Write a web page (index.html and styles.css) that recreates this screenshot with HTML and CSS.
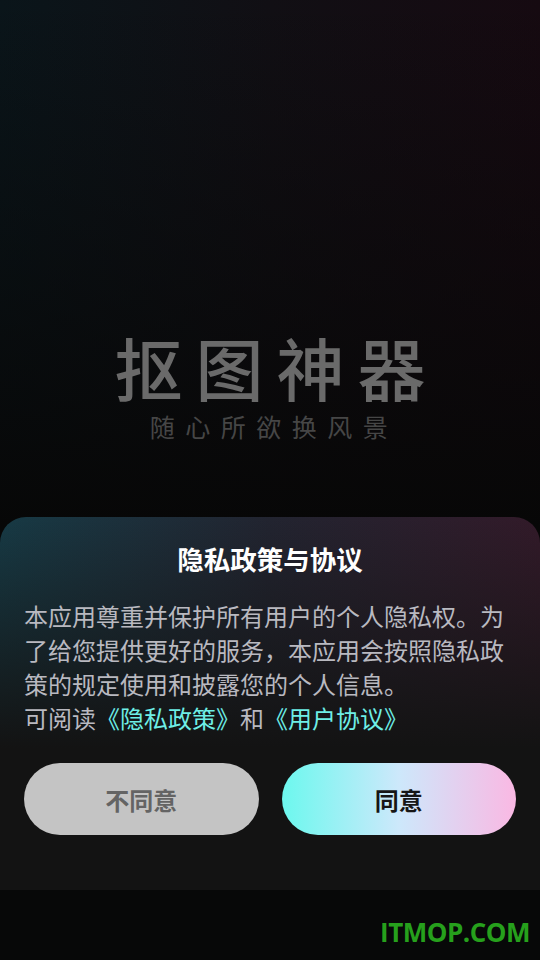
FILE: index.html
```html
<!DOCTYPE html>
<html>
<head>
  <title>抠图神器</title>
  <link rel="stylesheet" href="styles.css">
</head>
<body>
  <div class="app-screen">
    <header class="app-hero">
      <h1 class="app-title">抠图神器</h1>
      <p class="app-slogan">随心所欲换风景</p>
    </header>
    <section class="privacy-dialog">
      <h2 class="privacy-title">隐私政策与协议</h2>
      <p class="privacy-text">本应用尊重并保护所有用户的个人隐私权。为了给您提供更好的服务，本应用会按照隐私政策的规定使用和披露您的个人信息。<br>可阅读<a href="#" class="privacy-link">《隐私政策》</a>和<a href="#" class="privacy-link">《用户协议》</a></p>
      <div class="privacy-actions">
        <button class="btn btn-decline">不同意</button>
        <button class="btn btn-accept">同意</button>
      </div>
    </section>
    <footer class="app-footer">
      <span class="watermark">ITMOP.COM</span>
    </footer>
  </div>
</body>
</html>
```
FILE: styles.css
```css
body {
  margin: 0;
  background-color: #070707;
  font-family: "Noto Sans CJK SC", "Noto Sans", sans-serif;
}

.app-screen {
  width: 540px;
  height: 960px;
  display: flex;
  flex-direction: column;
  background:
    linear-gradient(to bottom, rgba(7, 7, 7, 0) 0%, #070707 55%),
    linear-gradient(to right, #0a151a 0%, #110f14 50%, #160a11 100%);
}

.app-hero {
  height: 517px;
  padding-top: 334px;
  box-sizing: border-box;
  text-align: center;
}

/* latin primary font keeps the line box tight, CJK glyphs fall back */
.app-title {
  margin: 0;
  font-family: "Liberation Sans", "Noto Sans CJK SC", sans-serif;
  font-size: 68px;
  line-height: 76px;
  font-weight: 500;
  letter-spacing: 13px;
  margin-right: -13px;
  color: #6a6a6a;
}

.app-slogan {
  margin: 1px 0 0;
  font-family: "Liberation Sans", "Noto Sans CJK SC", sans-serif;
  font-size: 25px;
  line-height: 34px;
  letter-spacing: 10.5px;
  margin-right: -8px;
  color: #464646;
}

.privacy-dialog {
  height: 373px;
  box-sizing: border-box;
  padding: 23px 24px 0;
  border-radius: 26px 26px 0 0;
  background:
    linear-gradient(to bottom, rgba(19, 19, 19, 0) 0%, #131313 62%),
    linear-gradient(to right, #173a45 0%, #222430 50%, #321a29 100%);
}

.privacy-title {
  margin: 0;
  text-align: center;
  font-size: 26.5px;
  line-height: 38px;
  font-weight: 700;
  color: #ffffff;
}

.privacy-text {
  margin: 21px 0 0;
  font-size: 24px;
  line-height: 34px;
  color: #b9b9c0;
}

.privacy-link {
  color: #6eeee6;
  text-decoration: none;
}

.privacy-actions {
  display: flex;
  gap: 23px;
  margin-top: 28px;
}

.btn {
  flex: 1;
  height: 72px;
  border: none;
  border-radius: 36px;
  font-family: inherit;
  font-size: 24px;
  font-weight: 700;
  cursor: pointer;
}

.btn-decline {
  background-color: #c4c4c4;
  color: #646464;
}

.btn-accept {
  background: linear-gradient(to right, #6cf8ee 0%, #cde8fb 50%, #fab8e3 100%);
  color: #161616;
}

.app-footer {
  flex: 1;
  display: flex;
  justify-content: flex-end;
  align-items: flex-end;
  padding: 0 10px 10px 0;
  background-color: #070808;
}

.watermark {
  font-family: "Open Sans", "Liberation Sans", sans-serif;
  font-size: 26px;
  font-weight: 700;
  letter-spacing: -0.5px;
  color: #26a01c;
}
```
